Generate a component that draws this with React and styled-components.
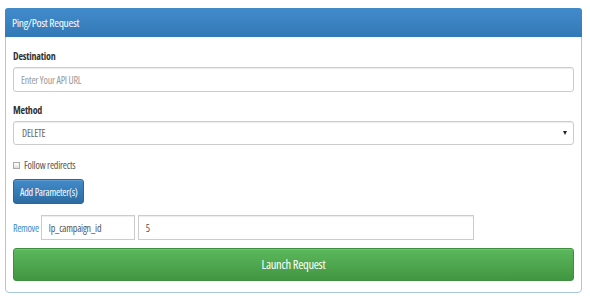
import React from "react";
import styled, { createGlobalStyle } from "styled-components";

const GlobalStyle = createGlobalStyle`
  body {
    margin: 0;
    background: #fff;
    font-family: "Open Sans", "Liberation Sans", Arial, sans-serif;
    font-stretch: 75%;
    color: #333;
  }
  input, button {
    font-family: inherit;
    font-stretch: inherit;
  }
`;

const Page = styled.div`
  padding: 8px 8px 6px 5px;
`;

const Panel = styled.div`
  border: 1px solid #a9c6e3;
  border-radius: 4px;
  background: #fff;
`;

const Heading = styled.div`
  height: 28px;
  display: flex;
  align-items: center;
  padding: 0 7px;
  color: #fff;
  font-size: 11.5px;
  letter-spacing: -0.3px;
  background: linear-gradient(#428bca, #3379b8);
  border-bottom: 1px solid #3379b8;
  border-radius: 3px 3px 0 0;
  margin: -1px -1px 0;
`;

const Body = styled.div`
  padding: 12px 7px 11px;
  display: flex;
  flex-direction: column;
`;

const Label = styled.label`
  font-weight: bold;
  font-size: 10px;
  letter-spacing: -0.2px;
  line-height: 14px;
  margin: ${(p) => p.$top || 0}px 0 4px;
`;

const Field = styled.input`
  box-sizing: border-box;
  height: 25px;
  width: ${(p) => p.$w || "100%"};
  border: 1px solid #ccc;
  border-radius: ${(p) => (p.$square ? 0 : 3)}px;
  box-shadow: inset 0 1px 1px rgba(0, 0, 0, 0.075);
  padding: 0 7px;
  font-size: 10px;
  letter-spacing: -0.2px;
  color: #555;
  background: #fff;
  outline: none;
  &::placeholder {
    color: #999;
  }
`;

const SelectBox = styled.div`
  box-sizing: border-box;
  height: 24px;
  border: 1px solid #ccc;
  border-radius: 3px;
  box-shadow: inset 0 1px 1px rgba(0, 0, 0, 0.075);
  padding: 0 6px 0 8px;
  display: flex;
  align-items: center;
  justify-content: space-between;
  font-size: 10px;
  letter-spacing: -0.2px;
  color: #666;
`;

const Caret = styled.span`
  width: 0;
  height: 0;
  border-left: 2px solid transparent;
  border-right: 2px solid transparent;
  border-top: 4px solid #222;
`;

const CheckRow = styled.div`
  display: flex;
  align-items: center;
  gap: 4px;
  height: 14px;
  margin-top: 13px;
  font-size: 10px;
  letter-spacing: -0.2px;
  color: #555;
`;

const Box = styled.span`
  box-sizing: border-box;
  width: 7px;
  height: 7px;
  border: 1px solid #aaa;
  background: linear-gradient(#fff, #ddd);
`;

const BlueButton = styled.button`
  align-self: flex-start;
  margin-top: 7px;
  height: 25px;
  padding: 0 6px;
  white-space: nowrap;
  border: 1px solid #2b669a;
  border-radius: 3px;
  background: linear-gradient(#428bca, #2d6ca2);
  box-shadow: inset 0 1px 0 rgba(255, 255, 255, 0.15);
  color: #fff;
  font-size: 10px;
  letter-spacing: -0.2px;
`;

const ParamRow = styled.div`
  display: flex;
  align-items: center;
  margin-top: 11px;
  gap: 3px;
`;

const RemoveLink = styled.a`
  color: #428bca;
  font-size: 10px;
  letter-spacing: -0.3px;
  margin-right: -1px;
  text-decoration: none;
`;

const GreenButton = styled.button`
  margin-top: 8px;
  height: 33px;
  width: 100%;
  border: 1px solid #3e8f3e;
  border-radius: 3px;
  background: linear-gradient(#5cb85c, #419641);
  box-shadow: inset 0 1px 0 rgba(255, 255, 255, 0.15);
  color: #fff;
  font-size: 12.5px;
  letter-spacing: -0.3px;
`;

export default function App() {
  return (
    <>
      <GlobalStyle />
      <Page>
        <Panel>
          <Heading>Ping/Post Request</Heading>
          <Body>
            <Label>Destination</Label>
            <Field placeholder="Enter Your API URL" />
            <Label $top={11}>Method</Label>
            <SelectBox>
              DELETE
              <Caret />
            </SelectBox>
            <CheckRow>
              <Box />
              Follow redirects
            </CheckRow>
            <BlueButton>Add Parameter(s)</BlueButton>
            <ParamRow>
              <RemoveLink href="#">Remove</RemoveLink>
              <Field $square $w="94px" defaultValue="lp_campaign_id" />
              <Field $square $w="336px" defaultValue="5" />
            </ParamRow>
            <GreenButton>Launch Request</GreenButton>
          </Body>
        </Panel>
      </Page>
    </>
  );
}
